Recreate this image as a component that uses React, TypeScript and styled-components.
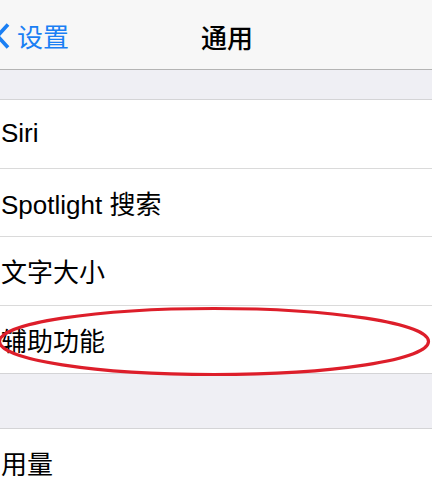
import React from "react";
import styled, { createGlobalStyle } from "styled-components";

const Global = createGlobalStyle`
  html, body { margin: 0; padding: 0; background: #efeff4; }
  body { font-family: "Liberation Sans", "Noto Sans CJK SC", sans-serif; overflow: hidden; }
  * { box-sizing: border-box; }
`;

const Screen = styled.div`
  position: relative;
  width: 432px;
  height: 496px;
  overflow: hidden;
  background: #efeff4;
`;

const NavBar = styled.div`
  position: relative;
  height: 70px;
  background: #f7f7f7;
  border-bottom: 1px solid #b4b4b4;
  display: flex;
  align-items: center;
`;

const Back = styled.div`
  display: flex;
  align-items: center;
  gap: 7px;
  margin-left: -5px;
  margin-top: 2px;
  color: #1a7ff4;
  font-family: "Noto Sans CJK SC", sans-serif;
  font-size: 26px;
  line-height: 1;
`;

const Title = styled.div`
  position: absolute;
  left: 201px;
  top: 0;
  height: 70px;
  display: flex;
  align-items: center;
  padding-top: 2px;
  font-family: "Noto Sans CJK SC", sans-serif;
  font-weight: 500;
  font-size: 26px;
  color: #000;
`;

const Gap = styled.div<{ $h: number }>`
  height: ${(p) => p.$h}px;
`;

const Group = styled.div`
  background: #fff;
  border-top: 1px solid #d4d4d6;
  border-bottom: 1px solid #d4d4d6;
`;

const Row = styled.div<{ $last?: boolean }>`
  height: ${(p) => (p.$last ? 67.5 : 68.5)}px;
  display: flex;
  align-items: center;
  padding-left: 1px;
  border-bottom: ${(p) => (p.$last ? "none" : "1px solid #dadada")};
  font-family: "Liberation Sans", "Noto Sans CJK SC", sans-serif;
  font-size: 26px;
  color: #000;
`;

const Ellipse = styled.svg`
  position: absolute;
  left: 0;
  top: 0;
  pointer-events: none;
`;

export default function App() {
  return (
    <>
      <Global />
      <Screen>
        <NavBar>
          <Back>
            <svg width="15" height="26" viewBox="0 0 15 26">
              <path d="M13 1.5 L2.5 13 L13 24.5" fill="none" stroke="#1a7ff4" strokeWidth="3.6" strokeLinecap="butt" strokeLinejoin="miter" />
            </svg>
            <span>设置</span>
          </Back>
          <Title>通用</Title>
        </NavBar>
        <Gap $h={29} />
        <Group>
          <Row>Siri</Row>
          <Row>Spotlight 搜索</Row>
          <Row>文字大小</Row>
          <Row $last>辅助功能</Row>
        </Group>
        <Gap $h={54} />
        <Group>
          <Row $last>用量</Row>
        </Group>
        <Ellipse width="432" height="496" viewBox="0 0 432 496">
          <ellipse cx="214" cy="341.5" rx="214.5" ry="33" fill="none" stroke="#dd1e2a" strokeWidth="3.2" />
        </Ellipse>
      </Screen>
    </>
  );
}
